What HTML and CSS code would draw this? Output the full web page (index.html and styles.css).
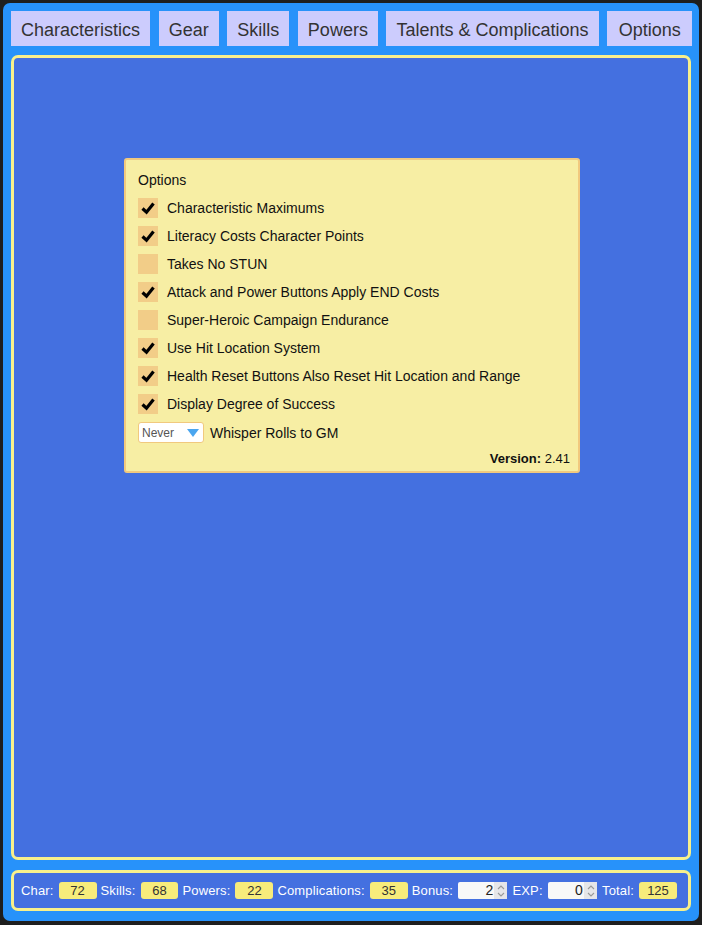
FILE: index.html
```html
<!DOCTYPE html>
<html lang="en">
<head>
<meta charset="utf-8">
<title>Character Sheet - Options</title>
<link rel="stylesheet" href="styles.css">
</head>
<body>
<div class="sheet">
  <nav class="tabs">
    <div class="tab">Characteristics</div>
    <div class="tab">Gear</div>
    <div class="tab">Skills</div>
    <div class="tab">Powers</div>
    <div class="tab">Talents &amp; Complications</div>
    <div class="tab">Options</div>
  </nav>
  <main class="content">
    <section class="options">
      <div class="options-title">Options</div>
      <ul class="option-list">
        <li class="option"><span class="check on"><svg viewBox="0 0 20 20"><path d="M4.5 10.5 L8.5 14.2 L15.5 5.5"/></svg></span><span>Characteristic Maximums</span></li>
        <li class="option"><span class="check on"><svg viewBox="0 0 20 20"><path d="M4.5 10.5 L8.5 14.2 L15.5 5.5"/></svg></span><span>Literacy Costs Character Points</span></li>
        <li class="option"><span class="check"></span><span>Takes No STUN</span></li>
        <li class="option"><span class="check on"><svg viewBox="0 0 20 20"><path d="M4.5 10.5 L8.5 14.2 L15.5 5.5"/></svg></span><span>Attack and Power Buttons Apply END Costs</span></li>
        <li class="option"><span class="check"></span><span>Super-Heroic Campaign Endurance</span></li>
        <li class="option"><span class="check on"><svg viewBox="0 0 20 20"><path d="M4.5 10.5 L8.5 14.2 L15.5 5.5"/></svg></span><span>Use Hit Location System</span></li>
        <li class="option"><span class="check on"><svg viewBox="0 0 20 20"><path d="M4.5 10.5 L8.5 14.2 L15.5 5.5"/></svg></span><span>Health Reset Buttons Also Reset Hit Location and Range</span></li>
        <li class="option"><span class="check on"><svg viewBox="0 0 20 20"><path d="M4.5 10.5 L8.5 14.2 L15.5 5.5"/></svg></span><span>Display Degree of Success</span></li>
        <li class="option select-row">
          <span class="select"><span class="select-text">Never</span><svg class="select-arrow" viewBox="0 0 12 8"><path d="M0 0 H12 L6 8 Z"/></svg></span>
          <span class="select-label">Whisper Rolls to GM</span>
        </li>
      </ul>
      <div class="version"><b>Version:</b> 2.41</div>
    </section>
  </main>
  <footer class="totals">
    <span class="lbl">Char:</span><span class="val">72</span>
    <span class="lbl">Skills:</span><span class="val">68</span>
    <span class="lbl">Powers:</span><span class="val">22</span>
    <span class="lbl">Complications:</span><span class="val">35</span>
    <span class="lbl">Bonus:</span><span class="num"><span class="num-text">2</span><span class="spin"><svg viewBox="0 0 10 16"><path d="M2 6 L5 3 L8 6 M2 10 L5 13 L8 10"/></svg></span></span>
    <span class="lbl">EXP:</span><span class="num"><span class="num-text">0</span><span class="spin"><svg viewBox="0 0 10 16"><path d="M2 6 L5 3 L8 6 M2 10 L5 13 L8 10"/></svg></span></span>
    <span class="lbl">Total:</span><span class="val">125</span>
  </footer>
</div>
</body>
</html>
```
FILE: styles.css
```css
html, body {
  margin: 0;
  padding: 0;
}
body {
  background: #1e1e1e;
  font-family: "Liberation Sans", Arial, Helvetica, sans-serif;
  color: #111;
  width: 702px;
  height: 925px;
  overflow: hidden;
}
.sheet {
  margin: 3px 0 0 3px;
  width: 696px;
  height: 918px;
  box-sizing: border-box;
  background: #2792fa;
  border-radius: 7px;
  padding: 8px;
  display: flex;
  flex-direction: column;
}
.tabs {
  display: flex;
  gap: 8.6px;
  height: 35px;
  margin-bottom: 9px;
}
.tab {
  background: #ccccfd;
  color: #333;
  font-size: 18px;
  height: 35px;
  box-sizing: border-box;
  line-height: 32px;
  padding: 3px 10px 0;
  white-space: nowrap;
}
.tab:last-child {
  padding: 3px 11.5px 0;
}
.content {
  height: 805px;
  box-sizing: border-box;
  background: #4470e0;
  border: 3px solid #f8f08c;
  border-radius: 7px;
  padding: 100px 0 0 2px;
}
.options {
  width: 456px;
  height: 315px;
  box-sizing: border-box;
  margin: 0 auto;
  background: #f7eea4;
  border: 2px solid #f1c97e;
  border-radius: 3px;
  padding: 12px 8px 4px 12px;
  font-size: 14px;
  color: #111;
  display: flex;
  flex-direction: column;
}
.options-title {
  line-height: 17px;
  margin-bottom: 9px;
}
.option-list {
  list-style: none;
  margin: 0;
  padding: 0;
  display: flex;
  flex-direction: column;
  gap: 8px;
}
.option {
  display: flex;
  align-items: center;
  height: 20px;
  gap: 9px;
}
.check {
  width: 20px;
  height: 20px;
  background: #f2cd88;
  display: block;
  flex: none;
}
.check svg {
  width: 20px;
  height: 20px;
  display: block;
}
.check svg path {
  fill: none;
  stroke: #000;
  stroke-width: 3.2;
  stroke-linecap: butt;
  stroke-linejoin: miter;
}
.select-row {
  height: 21px;
  gap: 6px;
}
.select {
  width: 66px;
  height: 21px;
  box-sizing: border-box;
  background: #fff;
  border: 1px solid #f1c97e;
  border-radius: 3px;
  display: flex;
  align-items: center;
  justify-content: space-between;
  padding: 0 4px 0 3px;
  flex: none;
}
.select-text {
  font-size: 12px;
  color: #555;
}
.select-arrow {
  width: 12px;
  height: 8px;
  display: block;
}
.select-arrow path {
  fill: #4aa6ef;
}
.version {
  margin-top: auto;
  text-align: right;
  font-size: 13px;
  line-height: 15px;
  margin-bottom: 1px;
}
.totals {
  margin-top: 10px;
  height: 41px;
  box-sizing: border-box;
  background: #4470e0;
  border: 3px solid #f8f08c;
  border-radius: 7px;
  display: flex;
  align-items: center;
  padding: 0 7px;
  font-size: 13px;
  letter-spacing: 0.15px;
  color: #fff;
}
.lbl {
  margin-right: 5px;
  white-space: nowrap;
}
.val {
  width: 40px;
  height: 17px;
  line-height: 17px;
  text-align: center;
  background: #f7ec7b;
  color: #333;
  border-radius: 3px;
  margin-right: 4px;
  letter-spacing: 0;
}
.num {
  width: 52px;
  height: 17px;
  display: flex;
  background: #f8f8f8;
  border-radius: 2px;
  margin-right: 5px;
  color: #222;
}
.num-text {
  flex: 1;
  text-align: right;
  line-height: 17px;
  font-size: 14px;
  padding-right: 1px;
}
.spin {
  width: 13px;
  height: 17px;
  background: #e6e6e8;
  display: flex;
  align-items: center;
  justify-content: center;
}
.spin svg {
  width: 10px;
  height: 16px;
  display: block;
}
.spin svg path {
  fill: none;
  stroke: #999;
  stroke-width: 1.1;
}
```
